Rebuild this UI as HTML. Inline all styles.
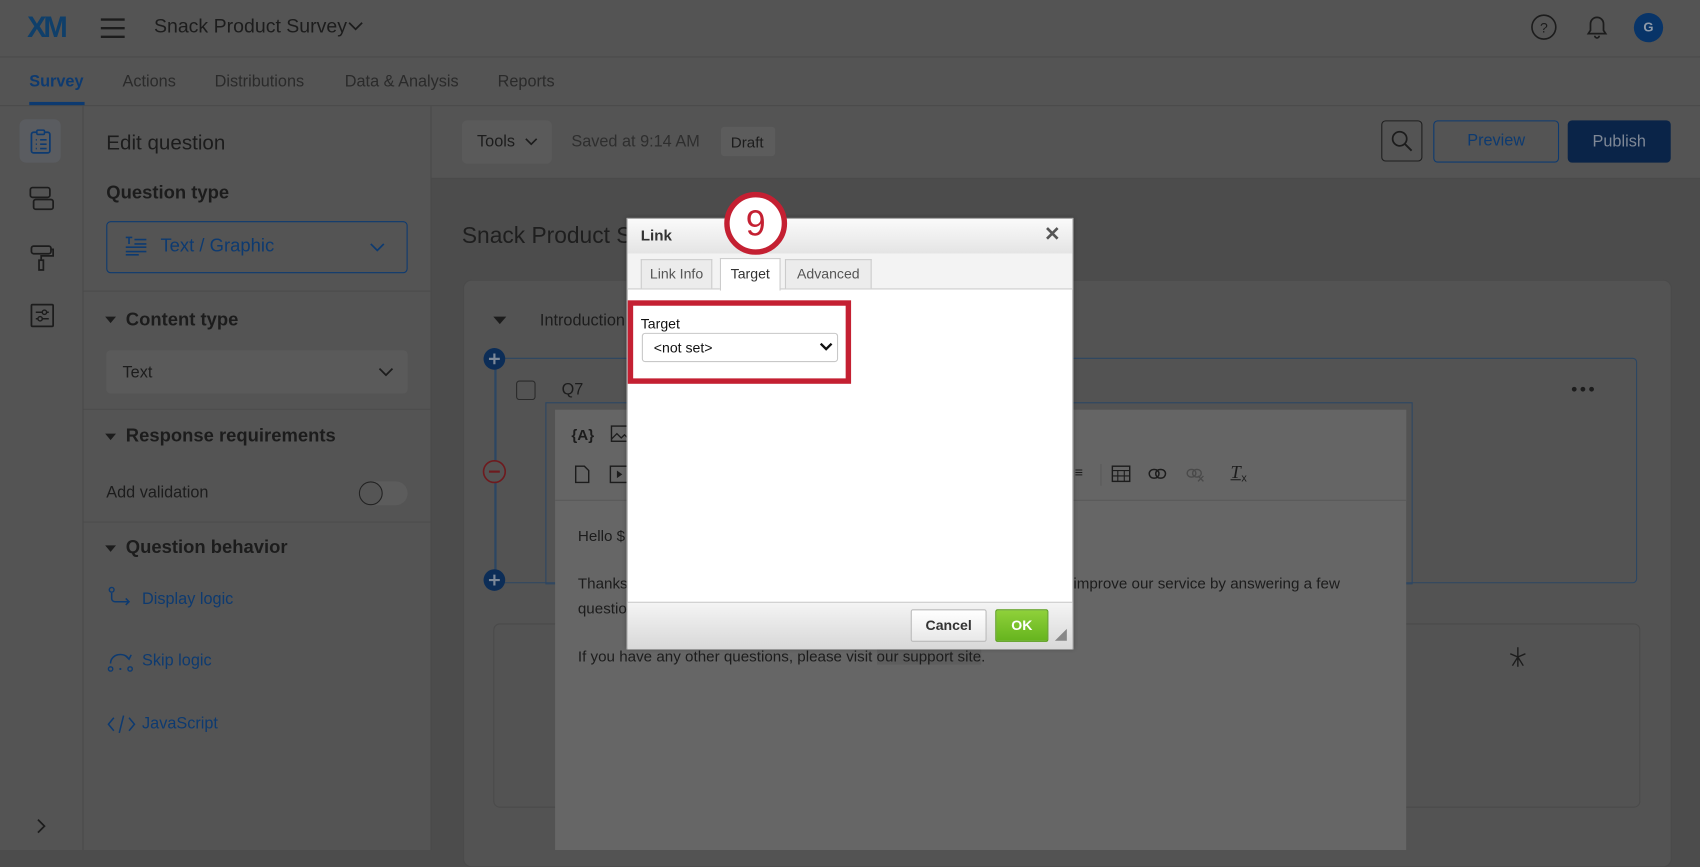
<!DOCTYPE html>
<html><head><meta charset="utf-8"><style>
html,body{margin:0;padding:0;width:1700px;height:850px;overflow:hidden;background:#4c4c4c}
#s{position:absolute;left:0;top:0;width:1568px;height:784px;transform:scale(1.08418);transform-origin:0 0;font-family:"Liberation Sans",sans-serif;color:#1c1c1c;background:#4c4c4c}
.a{position:absolute}
.t{position:absolute;white-space:nowrap}
svg{position:absolute;overflow:visible}
</style></head><body><div id="s">
<!-- header -->
<div class="a" style="left:0;top:0;width:1568px;height:52px;background:#545454;border-bottom:1px solid #4a4a4a"></div>
<div class="t" style="left:25px;top:10px;font-size:27px;font-weight:bold;letter-spacing:-3px;color:#0f3f6a">XM</div>
<svg style="left:93px;top:16px" width="24" height="20"><path d="M0 2h22M0 10h22M0 18h22" stroke="#1c1c1c" stroke-width="2.2"/></svg>
<div class="t" style="left:142px;top:14px;font-size:18px">Snack Product Survey</div>
<svg style="left:321px;top:19px" width="14" height="10"><path d="M1 2l6 6 6-6" stroke="#1c1c1c" stroke-width="1.6" fill="none"/></svg>
<svg style="left:1412px;top:13px" width="24" height="24"><circle cx="12" cy="12" r="11" stroke="#1c1c1c" stroke-width="1.5" fill="none"/><text x="12" y="17" font-size="13" text-anchor="middle" fill="#1c1c1c" font-family="Liberation Sans">?</text></svg>
<svg style="left:1462px;top:13px" width="22" height="24"><path d="M3 18h16l-2-3V9a6 6 0 0 0-12 0v6z M9 20a2 2 0 0 0 4 0" stroke="#1c1c1c" stroke-width="1.6" fill="none"/></svg>
<div class="a" style="left:1507px;top:12px;width:27px;height:27px;border-radius:50%;background:#083468;color:#8f9aa8;font-size:12px;font-weight:bold;text-align:center;line-height:27px">G</div>
<!-- tabs -->
<div class="a" style="left:0;top:53px;width:1568px;height:44px;background:#545454;border-bottom:1px solid #4a4a4a"></div>
<div class="t" style="left:27px;top:67px;font-size:15px;font-weight:bold;color:#0d3a70">Survey</div>
<div class="a" style="left:27px;top:94px;width:51px;height:3px;background:#0d3a70"></div>
<div class="t" style="left:113px;top:67px;font-size:15px;color:#2a2a2a">Actions</div>
<div class="t" style="left:198px;top:67px;font-size:15px;color:#2a2a2a">Distributions</div>
<div class="t" style="left:318px;top:67px;font-size:15px;color:#2a2a2a">Data &amp; Analysis</div>
<div class="t" style="left:459px;top:67px;font-size:15px;color:#2a2a2a">Reports</div>
<!-- left rail -->
<div class="a" style="left:0;top:98px;width:76px;height:686px;background:#545454;border-right:1px solid #4a4a4a"></div>
<div class="a" style="left:18px;top:110px;width:38px;height:40px;border-radius:6px;background:#5a5c60"></div>
<svg style="left:28px;top:119px" width="20" height="24"><rect x="1" y="3" width="17" height="19" rx="2" stroke="#0d3a70" stroke-width="1.6" fill="none"/><rect x="6" y="1" width="7" height="4" rx="1" stroke="#0d3a70" stroke-width="1.4" fill="#5a5c60"/><path d="M5 10h1M9 10h6M5 14h1M9 14h6M5 18h1M9 18h6" stroke="#0d3a70" stroke-width="1.5"/></svg>
<svg style="left:27px;top:172px" width="24" height="24"><rect x="1" y="1" width="18" height="9" rx="2" stroke="#1c1c1c" stroke-width="1.6" fill="none"/><rect x="4" y="12" width="18" height="9" rx="2" stroke="#1c1c1c" stroke-width="1.6" fill="none"/></svg>
<svg style="left:28px;top:225px" width="22" height="26"><rect x="1" y="2" width="18" height="7" rx="2" stroke="#1c1c1c" stroke-width="1.6" fill="none"/><path d="M19 5h2v6H10v4" stroke="#1c1c1c" stroke-width="1.6" fill="none"/><rect x="8" y="15" width="4" height="9" stroke="#1c1c1c" stroke-width="1.6" fill="none"/></svg>
<svg style="left:28px;top:280px" width="22" height="22"><rect x="1" y="1" width="20" height="20" rx="1" stroke="#1c1c1c" stroke-width="1.6" fill="none"/><path d="M5 8h12M5 14h12" stroke="#1c1c1c" stroke-width="1.4"/><circle cx="13" cy="8" r="2" fill="#545454" stroke="#1c1c1c" stroke-width="1.3"/><circle cx="9" cy="14" r="2" fill="#545454" stroke="#1c1c1c" stroke-width="1.3"/></svg>
<svg style="left:33px;top:755px" width="10" height="14"><path d="M2 1l6 6-6 6" stroke="#1c1c1c" stroke-width="1.6" fill="none"/></svg>
<!-- edit panel -->
<div class="a" style="left:77px;top:98px;width:320px;height:686px;background:#545454;border-right:1px solid #4a4a4a"></div>
<div class="t" style="left:98px;top:122px;font-size:19px">Edit question</div>
<div class="t" style="left:98px;top:168px;font-size:17px;font-weight:bold">Question type</div>
<div class="a" style="left:98px;top:204px;width:276px;height:46px;border:1.5px solid #0d3a70;border-radius:4px"></div>
<svg style="left:115px;top:218px" width="22" height="18"><path d="M1 1h6M4 1v6M9 3h11M9 7h11M1 10h19M1 14h19M1 17h12" stroke="#0d3a70" stroke-width="1.5"/></svg>
<div class="t" style="left:148px;top:217px;font-size:17px;color:#0d3a70">Text / Graphic</div>
<svg style="left:341px;top:224px" width="14" height="9"><path d="M1 1l6 6 6-6" stroke="#0d3a70" stroke-width="1.6" fill="none"/></svg>
<div class="a" style="left:77px;top:268px;width:320px;height:1px;background:#4c4c4c"></div>
<svg style="left:97px;top:292px" width="10" height="6"><path d="M0 0h10L5 6z" fill="#1c1c1c"/></svg>
<div class="t" style="left:116px;top:285px;font-size:17px;font-weight:bold">Content type</div>
<div class="a" style="left:98px;top:323px;width:278px;height:40px;border-radius:4px;background:#5a5a5a"></div>
<div class="t" style="left:113px;top:335px;font-size:15px">Text</div>
<svg style="left:349px;top:339px" width="14" height="9"><path d="M1 1l6 6 6-6" stroke="#1c1c1c" stroke-width="1.6" fill="none"/></svg>
<div class="a" style="left:77px;top:377px;width:320px;height:1px;background:#4c4c4c"></div>
<svg style="left:97px;top:400px" width="10" height="6"><path d="M0 0h10L5 6z" fill="#1c1c1c"/></svg>
<div class="t" style="left:116px;top:392px;font-size:17px;font-weight:bold">Response requirements</div>
<div class="t" style="left:98px;top:446px;font-size:15px">Add validation</div>
<div class="a" style="left:331px;top:444px;width:45px;height:22px;border-radius:11px;background:#5c5c5c"></div>
<div class="a" style="left:331px;top:444px;width:20px;height:20px;border-radius:50%;border:1px solid #222;background:#555"></div>
<div class="a" style="left:77px;top:481px;width:320px;height:1px;background:#4c4c4c"></div>
<svg style="left:97px;top:503px" width="10" height="6"><path d="M0 0h10L5 6z" fill="#1c1c1c"/></svg>
<div class="t" style="left:116px;top:495px;font-size:17px;font-weight:bold">Question behavior</div>
<svg style="left:100px;top:541px" width="24" height="22"><circle cx="3" cy="3" r="2.2" stroke="#0d3a70" stroke-width="1.3" fill="none"/><path d="M3 6v5a3 3 0 0 0 3 3h13M16 11l3 3-3 3" stroke="#0d3a70" stroke-width="1.4" fill="none"/></svg>
<div class="t" style="left:131px;top:544px;font-size:15px;color:#0d3a70">Display logic</div>
<svg style="left:99px;top:600px" width="26" height="22"><path d="M3 12a9 8 0 0 1 17-4M17 5l3 3 2-4" stroke="#0d3a70" stroke-width="1.4" fill="none"/><circle cx="3" cy="17" r="2" stroke="#0d3a70" stroke-width="1.3" fill="none"/><circle cx="21" cy="17" r="2" stroke="#0d3a70" stroke-width="1.3" fill="none"/><circle cx="12" cy="17" r="1" fill="#0d3a70"/></svg>
<div class="t" style="left:131px;top:601px;font-size:15px;color:#0d3a70">Skip logic</div>
<svg style="left:99px;top:658px" width="26" height="20"><path d="M6 4L1 10l5 6M20 4l5 6-5 6M15 2L11 18" stroke="#0d3a70" stroke-width="1.4" fill="none"/></svg>
<div class="t" style="left:131px;top:659px;font-size:15px;color:#0d3a70">JavaScript</div>
<!-- toolbar -->
<div class="a" style="left:398px;top:98px;width:1170px;height:66px;background:#545454;border-bottom:1px solid #4a4a4a"></div>
<div class="a" style="left:426px;top:111px;width:83px;height:40px;border-radius:5px;background:#5a5a5a"></div>
<div class="t" style="left:440px;top:122px;font-size:15px">Tools</div>
<svg style="left:484px;top:127px" width="12" height="8"><path d="M1 1l5 5 5-5" stroke="#1c1c1c" stroke-width="1.5" fill="none"/></svg>
<div class="t" style="left:527px;top:122px;font-size:15px;color:#2e2e2e">Saved at 9:14 AM</div>
<div class="a" style="left:665px;top:117px;width:50px;height:27px;border-radius:3px;background:#5c5c5c"></div>
<div class="t" style="left:674px;top:123px;font-size:14px">Draft</div>
<div class="a" style="left:1274px;top:111px;width:38px;height:38px;border:1.5px solid #1e1e1e;border-radius:4px;box-sizing:border-box"></div>
<svg style="left:1283px;top:120px" width="22" height="22"><circle cx="8" cy="8" r="6.5" stroke="#1c1c1c" stroke-width="1.6" fill="none"/><path d="M13 13l6 6" stroke="#1c1c1c" stroke-width="1.8"/></svg>
<div class="a" style="left:1322px;top:111px;width:116px;height:39px;border:1.5px solid #0d3a70;border-radius:4px;box-sizing:border-box;color:#0d3a70;font-size:15px;text-align:center;line-height:36px">Preview</div>
<div class="a" style="left:1446px;top:111px;width:95px;height:39px;border-radius:4px;background:#0a2448;color:#7f8896;font-size:15px;text-align:center;line-height:39px">Publish</div>
<!-- main -->
<div class="t" style="left:426px;top:206px;font-size:21px;color:#1e1e1e">Snack Product Survey</div>
<div class="a" style="left:427px;top:258px;width:1113px;height:540px;background:#535353;border:1px solid #4a4a4a;border-radius:8px"></div>
<svg style="left:455px;top:292px" width="12" height="7"><path d="M0 0h12L6 7z" fill="#1c1c1c"/></svg>
<div class="t" style="left:498px;top:287px;font-size:15px">Introduction</div>
<div class="a" style="left:456px;top:330px;width:1054px;height:208px;border:1.5px solid #2c4663;border-radius:4px;box-sizing:border-box"></div>
<div class="a" style="left:456px;top:330px;width:2px;height:208px;background:#2c4663"></div>
<svg style="left:445px;top:320px" width="22" height="22"><circle cx="11" cy="11" r="10" fill="#0c2d57"/><path d="M6 11h10M11 6v10" stroke="#7c8898" stroke-width="2"/></svg>
<svg style="left:445px;top:524px" width="22" height="22"><circle cx="11" cy="11" r="10" fill="#0c2d57"/><path d="M6 11h10M11 6v10" stroke="#7c8898" stroke-width="2"/></svg>
<svg style="left:445px;top:424px" width="22" height="22"><circle cx="11" cy="11" r="10" fill="#545454" stroke="#6e1a1e" stroke-width="1.5"/><path d="M6 11h10" stroke="#6e1a1e" stroke-width="2"/></svg>
<div class="a" style="left:476px;top:351px;width:16px;height:16px;border:1.5px solid #2a2a2a;border-radius:3px"></div>
<div class="t" style="left:518px;top:351px;font-size:15px">Q7</div>
<svg style="left:1449px;top:356px" width="22" height="6"><circle cx="3" cy="3" r="2.2" fill="#1c1c1c"/><circle cx="11" cy="3" r="2.2" fill="#1c1c1c"/><circle cx="19" cy="3" r="2.2" fill="#1c1c1c"/></svg>
<div class="a" style="left:503px;top:371px;width:800px;height:168px;border:1.5px solid #2c4663;box-sizing:border-box"></div>
<div class="a" style="left:455px;top:575px;width:1056px;height:168px;background:#535353;border:1px solid #4a4a4a;border-radius:6px"></div>
<svg style="left:1392px;top:597px" width="16" height="18"><path d="M8 0v18M1 6l7 3 7-3M8 9L3 17M8 9l5 8" stroke="#1c1c1c" stroke-width="1.3" fill="none"/></svg>
<!-- editor -->
<div class="a" style="left:512px;top:378px;width:785px;height:406px;background:#666;"></div>
<div class="a" style="left:512px;top:378px;width:785px;height:83px;background:#656565;border-bottom:1px solid #5a5a5a"></div>
<div class="t" style="left:527px;top:393px;font-size:14px;font-weight:bold;color:#1c1c1c">{A}</div>
<svg style="left:563px;top:392px" width="18" height="16"><rect x="1" y="1" width="16" height="14" stroke="#1c1c1c" stroke-width="1.3" fill="none"/><path d="M1 13l5-5 4 4 3-3 4 4" stroke="#1c1c1c" stroke-width="1.2" fill="none"/></svg>
<svg style="left:530px;top:429px" width="14" height="17"><path d="M1 1h8l4 4v11H1z" stroke="#1c1c1c" stroke-width="1.3" fill="none"/></svg>
<svg style="left:562px;top:429px" width="18" height="17"><rect x="1" y="1" width="16" height="15" stroke="#1c1c1c" stroke-width="1.3" fill="none"/><path d="M7 5v7l5-3.5z" fill="#1c1c1c"/></svg>
<div class="t" style="left:987px;top:428px;font-size:13px;font-weight:bold">:≡</div>
<div class="a" style="left:1015px;top:428px;width:1px;height:20px;background:#5a5a5a"></div>
<svg style="left:1025px;top:429px" width="18" height="16"><rect x="1" y="1" width="16" height="14" stroke="#1c1c1c" stroke-width="1.3" fill="none"/><path d="M1 5h16M1 10h16M6 5v10M12 5v10" stroke="#1c1c1c" stroke-width="1"/></svg>
<svg style="left:1059px;top:431px" width="18" height="12"><rect x="1" y="2" width="9" height="8" rx="4" stroke="#1c1c1c" stroke-width="1.4" fill="none"/><rect x="7" y="2" width="9" height="8" rx="4" stroke="#1c1c1c" stroke-width="1.4" fill="none"/></svg>
<svg style="left:1094px;top:431px" width="18" height="14"><rect x="1" y="2" width="8" height="7" rx="3.5" stroke="#4a4a4a" stroke-width="1.3" fill="none"/><rect x="6" y="2" width="8" height="7" rx="3.5" stroke="#4a4a4a" stroke-width="1.3" fill="none"/><path d="M11 8l5 5M16 8l-5 5" stroke="#4a4a4a" stroke-width="1.2"/></svg>
<div class="t" style="left:1135px;top:426px;font-size:17px;font-style:italic;font-family:'Liberation Serif',serif;text-decoration:underline">T</div>
<div class="t" style="left:1145px;top:436px;font-size:10px">x</div>
<div class="t" style="left:533px;top:486px;font-size:14px">Hello $</div>
<div class="t" style="left:533px;top:530px;font-size:14px">Thanks</div>
<div class="t" style="left:990px;top:530px;font-size:14px">improve our service by answering a few</div>
<div class="t" style="left:533px;top:553px;font-size:14px">questio</div>
<div class="t" style="left:533px;top:597px;font-size:14px">If you have any other questions, please visit <span style="background:#5e5e5e">our support site</span>.</div>
<!-- dialog -->
<div class="a" style="left:578px;top:201px;width:412px;height:398px;background:#fff;border:1px solid #aaa;box-sizing:border-box;box-shadow:0 0 4px rgba(0,0,0,.3)"></div>
<div class="a" style="left:579px;top:202px;width:410px;height:32px;background:linear-gradient(#fafafa,#e4e4e4)"></div>
<div class="t" style="left:591px;top:209px;font-size:14px;font-weight:bold;color:#333">Link</div>
<div class="t" style="left:963px;top:206px;font-size:18px;font-weight:bold;color:#555">✕</div>
<div class="a" style="left:579px;top:234px;width:410px;height:32px;background:#f3f3f3;border-bottom:1px solid #ccc"></div>
<div class="a" style="left:591px;top:239px;width:66px;height:27px;background:#ececec;border:1px solid #ccc;border-bottom:none;box-sizing:border-box;font-size:13px;color:#555;text-align:center;line-height:26px">Link Info</div>
<div class="a" style="left:664px;top:238px;width:56px;height:30px;background:#fff;border:1px solid #ccc;border-bottom:none;box-sizing:border-box;font-size:13px;color:#333;text-align:center;line-height:28px">Target</div>
<div class="a" style="left:724px;top:239px;width:80px;height:27px;background:#ececec;border:1px solid #ccc;border-bottom:none;box-sizing:border-box;font-size:13px;color:#555;text-align:center;line-height:26px">Advanced</div>
<div class="a" style="left:579px;top:277px;width:206px;height:77px;border:5px solid #c42032;box-sizing:border-box"></div>
<div class="t" style="left:591px;top:291px;font-size:13px;color:#111">Target</div>
<div class="a" style="left:592px;top:307px;width:181px;height:27px;border:1px solid #c8c8c8;border-radius:3px;box-sizing:border-box;background:#fff"></div>
<div class="t" style="left:603px;top:313px;font-size:13px;color:#111">&lt;not set&gt;</div>
<svg style="left:756px;top:316px" width="12" height="8"><path d="M1 1l5 5 5-5" stroke="#111" stroke-width="2.2" fill="none"/></svg>
<div class="a" style="left:579px;top:555px;width:410px;height:43px;background:linear-gradient(#f4f4f4,#d8d8d8);border-top:1px solid #c8c8c8"></div>
<div class="a" style="left:840px;top:562px;width:70px;height:30px;background:linear-gradient(#fff,#e8e8e8);border:1px solid #bbb;border-radius:2px;box-sizing:border-box;font-size:13px;font-weight:bold;color:#333;text-align:center;line-height:28px">Cancel</div>
<div class="a" style="left:918px;top:562px;width:49px;height:30px;background:linear-gradient(#8fd13a,#66b41e);border:1px solid #5a9e1b;border-radius:2px;box-sizing:border-box;font-size:13px;font-weight:bold;color:#fff;text-align:center;line-height:28px">OK</div>
<svg style="left:973px;top:580px" width="12" height="12"><path d="M11 0v11H0z" fill="#888"/></svg>
<!-- callout 9 -->
<div class="a" style="left:668px;top:177px;width:58px;height:58px;border-radius:50%;background:#fff;border:5px solid #c42032;box-sizing:border-box;text-align:center;font-size:33px;line-height:47px;color:#c42032">9</div>
</div></body></html>
